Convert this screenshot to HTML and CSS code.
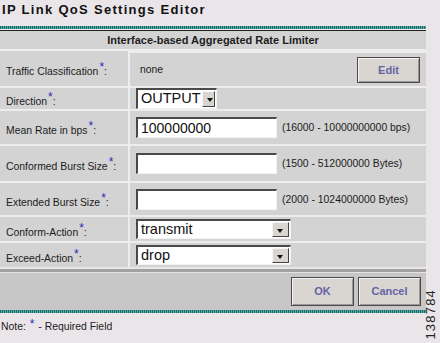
FILE: index.html
```html
<!DOCTYPE html>
<html lang="en">
<head>
  <meta charset="UTF-8" />
  <title>IP Link QoS Settings Editor</title>
  <link rel="stylesheet" href="styles.css">
</head>
<body>
  <div class="page">
    <h1 class="title">IP Link QoS Settings Editor</h1>
    <div class="rule-top"></div>

    <table class="editor">
      <tr class="head"><th colspan="2">Interface-based Aggregated Rate Limiter</th></tr>
      <tr class="row-traffic">
        <td class="lbl">Traffic Classification<span class="req">*</span>:</td>
        <td class="val"><span class="plain">none</span><button class="btn btn-edit">Edit</button></td>
      </tr>
      <tr class="row-dir">
        <td class="lbl">Direction<span class="req">*</span>:</td>
        <td class="val">
          <div class="select select-dir"><span class="sel-text">OUTPUT</span><span class="sel-arrow"></span></div>
        </td>
      </tr>
      <tr class="row-mean">
        <td class="lbl">Mean Rate in bps<span class="req">*</span>:</td>
        <td class="val"><input class="field" type="text" value="100000000"><span class="range">(16000 - 10000000000 bps)</span></td>
      </tr>
      <tr class="row-conf">
        <td class="lbl">Conformed Burst Size<span class="req">*</span>:</td>
        <td class="val"><input class="field" type="text" value=""><span class="range">(1500 - 512000000 Bytes)</span></td>
      </tr>
      <tr class="row-ext">
        <td class="lbl">Extended Burst Size<span class="req">*</span>:</td>
        <td class="val"><input class="field" type="text" value=""><span class="range">(2000 - 1024000000 Bytes)</span></td>
      </tr>
      <tr class="row-action">
        <td class="lbl">Conform-Action<span class="req">*</span>:</td>
        <td class="val">
          <div class="select select-wide"><span class="sel-text">transmit</span><span class="sel-arrow"></span></div>
        </td>
      </tr>
      <tr class="row-action row-last">
        <td class="lbl">Exceed-Action<span class="req">*</span>:</td>
        <td class="val">
          <div class="select select-wide"><span class="sel-text">drop</span><span class="sel-arrow"></span></div>
        </td>
      </tr>
    </table>

    <div class="button-bar">
      <button class="btn btn-ok">OK</button>
      <button class="btn btn-cancel">Cancel</button>
    </div>
    <div class="rule-bottom"></div>

    <p class="note">Note: <span class="req">*</span> - Required Field</p>
  </div>
  <span class="fig-id">138784</span>
</body>
</html>
```

FILE: styles.css
```css
body {
  margin: 0;
  padding: 0;
  background-color: #e9e5e9;
  font-family: 'Liberation Sans', Arial, sans-serif;
  font-size: 10.4px;
  color: #1c1c1c;
  height: 343px;
  position: relative;
  overflow: hidden;
}

.page {
  width: 426px;
}

.title {
  margin: 0;
  height: 26px;
  padding: 2px 0 0 2px;
  box-sizing: border-box;
  font-size: 13px;
  font-weight: bold;
  letter-spacing: 1.3px;
  color: #111;
}

.rule-top {
  height: 3px;
  background: repeating-linear-gradient(90deg, #11706c 0 1px, #5fa6a2 1px 2px);
  border-bottom: 1px solid #f4f4f4;
  box-shadow: 0 2px 0 #1e1e1e;
  margin-bottom: 1px;
}

.rule-bottom {
  height: 3px;
  background: repeating-linear-gradient(90deg, #11706c 0 1px, #5fa6a2 1px 2px);
}

.editor {
  width: 426px;
  border-collapse: collapse;
  background: #d3d3d3;
}

.editor th {
  height: 18px;
  padding: 0;
  font-size: 11px;
  font-weight: bold;
  text-align: center;
  border-bottom: 2px solid #ededed;
}

.editor td {
  padding: 0;
  border-top: 2px solid #ededed;
  vertical-align: middle;
}

.editor .lbl {
  width: 122px;
  padding-left: 6px;
  border-right: 2px solid #ededed;
}

.editor .val {
  padding-left: 6px;
}

.val {
  white-space: nowrap;
}

.req {
  color: #2a2ab8;
  font-size: 12px;
  vertical-align: 4px;
  margin-left: 1px;
}

.row-traffic { height: 35px; }
.row-dir { height: 23px; }
.row-mean { height: 35px; }
.row-conf { height: 37px; }
.row-ext { height: 34px; }
.row-action { height: 26px; }
.row-last { height: 25px; }

.row-traffic .val {
  display: flex;
  align-items: center;
  height: 33px;
  padding-right: 6px;
}

.plain {
  margin-left: 4px;
}

.btn {
  font-family: 'Liberation Sans', Arial, sans-serif;
  font-size: 11px;
  font-weight: bold;
  color: #6464a4;
  background: #d9d6d2;
  border: 1px solid #4a4a4a;
  box-shadow: inset 1px 1px 0 #f4f2ee, inset -1px -1px 0 #9a9894;
  padding: 0;
  cursor: pointer;
}

.btn-edit {
  margin-left: auto;
  width: 63px;
  height: 26px;
}

.field {
  width: 141px;
  height: 21px;
  box-sizing: border-box;
  margin: 0;
  padding: 0 3px;
  font-family: 'Liberation Sans', Arial, sans-serif;
  font-size: 14px;
  color: #111;
  background: #fff;
  border-style: solid;
  border-width: 2px 1px 1px 2px;
  border-color: #4a4a4a #f2f2f2 #f2f2f2 #4a4a4a;
  vertical-align: middle;
}

.range {
  margin-left: 5px;
  vertical-align: middle;
}

.select {
  display: flex;
  align-items: stretch;
  box-sizing: border-box;
  height: 20px;
  background: #fff;
  border-style: solid;
  border-width: 2px 1px 1px 2px;
  border-color: #4a4a4a #f2f2f2 #f2f2f2 #4a4a4a;
}

.select-dir { width: 81px; height: 21px; }
.select-wide { width: 155px; }

.sel-text {
  flex: 1;
  padding-left: 3px;
  font-size: 14.5px;
  line-height: 17px;
  color: #111;
}

.sel-arrow {
  width: 15px;
  margin: 1px;
  background: #d9d6d2;
  border: 1px solid;
  border-color: #f6f6f6 #444 #444 #f6f6f6;
  position: relative;
}

.sel-arrow::after {
  content: "";
  position: absolute;
  left: 4px;
  top: 6px;
  border-left: 3.5px solid transparent;
  border-right: 3.5px solid transparent;
  border-top: 4px solid #111;
}

.button-bar {
  display: flex;
  justify-content: flex-end;
  align-items: center;
  gap: 4px;
  height: 38px;
  padding-right: 5px;
  background: #c7c7c7;
  border-top: 3px solid #a2a2a2;
  box-shadow: inset 0 1px 0 #e4e4e4;
  margin-top: 2px;
}

.btn-ok {
  width: 63px;
  height: 29px;
}

.btn-cancel {
  width: 63px;
  height: 29px;
}

.note {
  margin: 0;
  padding: 4px 0 0 1px;
}

.note .req {
  vertical-align: 2px;
  margin: 0 1px;
}

.fig-id {
  position: absolute;
  right: 2px;
  bottom: 3px;
  writing-mode: vertical-rl;
  transform: rotate(180deg);
  font-size: 13px;
  color: #222;
  letter-spacing: 1.2px;
}
```
